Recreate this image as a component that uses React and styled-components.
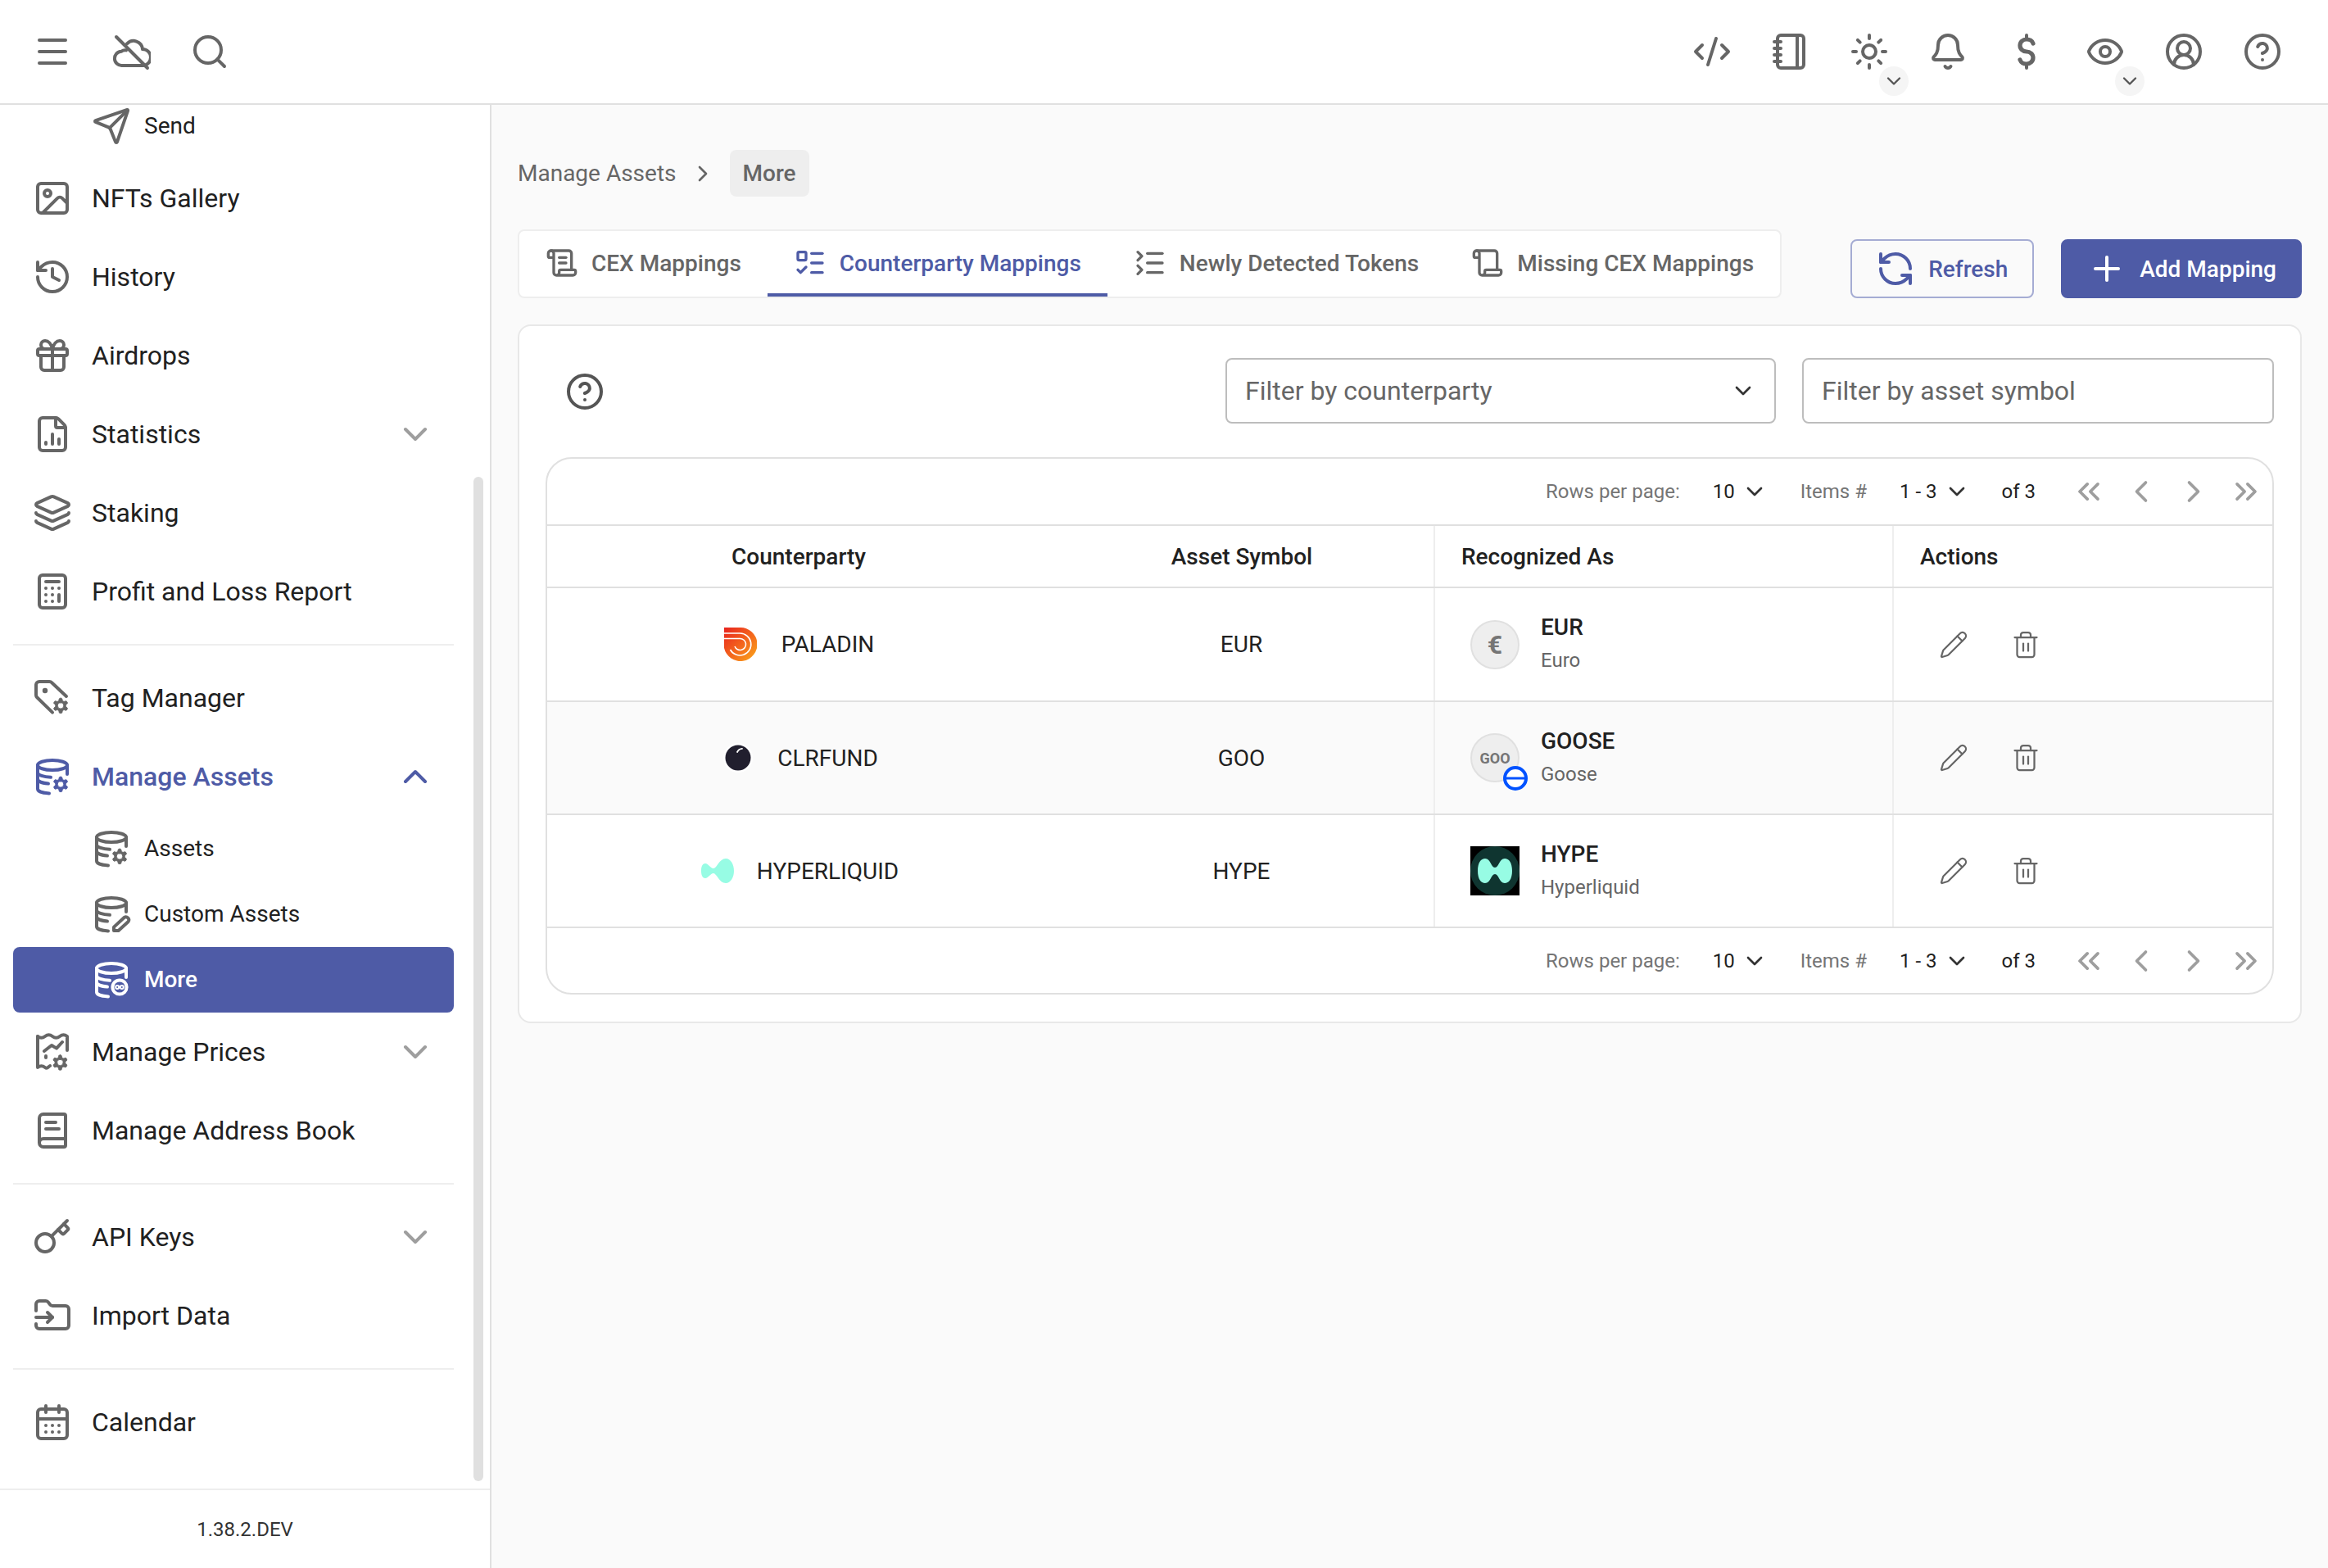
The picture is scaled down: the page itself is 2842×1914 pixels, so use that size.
import React from "react";
import styled, { createGlobalStyle } from "styled-components";
import {
  Menu, Search, Send, Image, History, Gift, FileChartColumn, Layers, Calculator,
  ChevronDown, ChevronUp, ChevronRight, ChevronLeft, ChevronsLeft, ChevronsRight, BookText, Key, FolderInput,
  CalendarDays, CodeXml, Notebook, Sun, Bell, Eye, CircleUserRound, CircleHelp,
  ScrollText, Scroll, ListTodo, ListCollapse, RefreshCcw, Plus, Pencil, Trash2,
} from "lucide-react";

const PRIMARY = "#4e5ba6";

const Global = createGlobalStyle`
  html, body { margin: 0; padding: 0; background: #fff; }
  body { font-family: Roboto, "Liberation Sans", sans-serif; color: #212121; }
  * { box-sizing: border-box; }
`;

const Page = styled.div`
  width: 2842px;
  height: 1914px;
  display: flex;
  flex-direction: column;
  overflow: hidden;
`;

const TopBar = styled.header`
  height: 128px;
  flex: none;
  display: flex;
  justify-content: space-between;
  align-items: center;
  padding: 0 32px 0 16px;
  background: #fff;
  border-bottom: 2px solid #e0e0e0;
`;

const TopGroup = styled.div`
  display: flex;
  align-items: center;
`;

const TopButton = styled.div`
  position: relative;
  width: 96px;
  height: 96px;
  display: flex;
  align-items: center;
  justify-content: center;
  color: #666;
`;

const MiniBadge = styled.span`
  position: absolute;
  right: 0;
  bottom: -6px;
  width: 36px;
  height: 36px;
  border-radius: 50%;
  background: #f5f5f5;
  color: #555;
  display: flex;
  align-items: center;
  justify-content: center;
`;

const Body = styled.div`
  flex: 1;
  display: flex;
  min-height: 0;
`;

const Sidebar = styled.aside`
  position: relative;
  width: 600px;
  flex: none;
  display: flex;
  flex-direction: column;
  background: #fff;
  border-right: 2px solid #e0e0e0;
`;

const NavScroll = styled.nav`
  flex: 1;
  min-height: 0;
  overflow: hidden;
`;

const NavInner = styled.div`
  margin-top: -14px;
`;

const NavRow = styled.div`
  height: 96px;
  margin: 0 44px 0 16px;
  padding: 0 23px 0 24px;
  display: flex;
  align-items: center;
  gap: 24px;
  font-size: 32px;
  font-weight: ${(p) => (p.$open ? 500 : 400)};
  color: ${(p) => (p.$open ? PRIMARY : "#212121")};
  svg { color: ${(p) => (p.$open ? PRIMARY : "#666")}; flex: none; }
`;

const NavLabel = styled.span`
  flex: 1;
`;

const SubRow = styled.div`
  height: 80px;
  margin: 0 44px 0 16px;
  padding-left: 96px;
  display: flex;
  align-items: center;
  gap: 16px;
  font-size: 28px;
  border-radius: 8px;
  font-weight: ${(p) => (p.$active ? 500 : 400)};
  color: ${(p) => (p.$active ? "#fff" : "#212121")};
  background: ${(p) => (p.$active ? PRIMARY : "transparent")};
  svg { color: ${(p) => (p.$active ? "#fff" : "#666")}; flex: none; }
`;

const SubLabel = styled.span`
  margin-top: -2px;
`;

const NavDivider = styled.div`
  height: 2px;
  margin: 16px 44px 16px 16px;
  background: #eeeeee;
`;

const NavChevron = styled.span`
  display: flex;
  svg { color: ${(p) => (p.$open ? PRIMARY : "#9e9e9e")}; }
`;

const Thumb = styled.div`
  position: absolute;
  left: 578px;
  top: 454px;
  width: 12px;
  height: 1226px;
  border-radius: 6px;
  background: #e0e0e0;
`;

const SideFooter = styled.div`
  height: 97px;
  flex: none;
  border-top: 2px solid #eeeeee;
  display: flex;
  align-items: center;
  justify-content: center;
  font-size: 24px;
  color: #333;
`;

const Main = styled.main`
  flex: 1;
  min-width: 0;
  background: #fafafa;
  padding: 55px 32px 0 32px;
`;

const Crumbs = styled.div`
  display: flex;
  align-items: center;
  height: 57px;
  margin-bottom: 40px;
  font-size: 28px;
  color: #666;
`;

const CrumbSep = styled.span`
  display: flex;
  width: 65px;
  justify-content: center;
  svg { color: #666; }
`;

const CrumbChip = styled.span`
  height: 57px;
  padding: 0 16px;
  display: flex;
  align-items: center;
  border-radius: 8px;
  background: #eeeeee;
  font-weight: 500;
`;

const ToolRow = styled.div`
  display: flex;
  align-items: flex-end;
  justify-content: space-between;
  margin-bottom: 32px;
`;

const Tabs = styled.div`
  display: flex;
  height: 84px;
  border: 2px solid #eeeeee;
  border-radius: 8px;
  background: #fff;
`;

const Tab = styled.div`
  height: 74px;
  margin-top: 2px;
  padding: 0 32px;
  display: flex;
  align-items: center;
  gap: 16px;
  font-size: 28px;
  font-weight: 500;
  color: ${(p) => (p.$active ? PRIMARY : "#666")};
  box-shadow: ${(p) => (p.$active ? `0 4px 0 ${PRIMARY}` : "none")};
`;

const ButtonRow = styled.div`
  display: flex;
  gap: 33px;
`;

const Button = styled.div`
  height: 72px;
  padding: ${(p) => (p.$solid ? "0 29px 0 30px" : "0 30px 0 29px")};
  display: flex;
  align-items: center;
  gap: 16px;
  border-radius: 8px;
  font-size: 28px;
  font-weight: 500;
  color: ${(p) => (p.$solid ? "#fff" : PRIMARY)};
  background: ${(p) => (p.$solid ? PRIMARY : "transparent")};
  border: 2px solid ${(p) => (p.$solid ? PRIMARY : "#a5acd3")};
`;

const Card = styled.section`
  width: 2178px;
  padding: 39px 32px 33px;
  border: 2px solid #e8e8e8;
  border-radius: 16px;
  background: #fff;
`;

const FilterRow = styled.div`
  display: flex;
  align-items: center;
  gap: 32px;
  margin-bottom: 41px;
  padding-left: 24px;
  svg { flex: none; }
`;

const HelpWrap = styled.div`
  flex: 1;
  display: flex;
  padding-top: 2px;
  color: #555;
`;

const Field = styled.div`
  width: ${(p) => p.$w}px;
  height: 80px;
  padding: 0 22px;
  display: flex;
  align-items: center;
  justify-content: space-between;
  border: 2px solid #bdbdbd;
  border-radius: 8px;
  font-size: 32px;
  color: #666;
  svg { color: #333; }
`;

const TableFrame = styled.div`
  border: 2px solid #e0e0e0;
  border-radius: 32px;
  overflow: hidden;
`;

const PagerRow = styled.div`
  height: ${(p) => p.$h}px;
  display: flex;
  align-items: center;
  justify-content: flex-end;
  font-size: 24px;
  color: #212121;
  border-top: ${(p) => (p.$rule ? "2px solid #e0e0e0" : "none")};
`;

const PagerLabel = styled.span`
  color: #757575;
  margin-right: ${(p) => p.$mr}px;
`;

const PagerPick = styled.span`
  display: flex;
  align-items: center;
  gap: 8px;
  margin-right: ${(p) => p.$mr}px;
  svg { color: #333; }
`;

const PagerTotal = styled.span`
  margin-right: 33px;
`;

const PagerNav = styled.span`
  width: 64px;
  display: flex;
  justify-content: center;
  svg { color: #9e9e9e; }
`;

const GridRow = styled.div`
  display: grid;
  grid-template-columns: 610px 472px 560px 1fr;
  height: ${(p) => p.$h}px;
  border-top: 2px solid #e0e0e0;
  background: ${(p) => (p.$alt ? "#fafafa" : "#fff")};
`;

const HeadCell = styled.div`
  display: flex;
  align-items: center;
  font-size: 28px;
  font-weight: 500;
  color: #212121;
  justify-content: ${(p) => (p.$center ? "center" : "flex-start")};
  padding-left: ${(p) => (p.$center ? 4 : 32)}px;
  border-left: ${(p) => (p.$line ? "2px solid #eeeeee" : "none")};
`;

const CounterCell = styled.div`
  display: flex;
  align-items: center;
  justify-content: center;
  gap: 24px;
  font-size: 28px;
  padding-left: 3px;
`;

const LogoBox = styled.span`
  width: 48px;
  height: 48px;
  display: flex;
  align-items: center;
  justify-content: ${(p) => (p.$left ? "flex-start" : "center")};
  padding-left: ${(p) => (p.$left ? 2 : 0)}px;
`;

const CenterCell = styled.div`
  display: flex;
  align-items: center;
  justify-content: center;
  padding-left: 3px;
  font-size: 28px;
`;

const AssetCell = styled.div`
  display: flex;
  align-items: center;
  gap: 26px;
  padding-left: 43px;
  border-left: 2px solid #eeeeee;
`;

const Avatar = styled.span`
  position: relative;
  width: 60px;
  height: 60px;
  flex: none;
  display: flex;
  align-items: center;
  justify-content: center;
  border-radius: 50%;
  background: #eeeeee;
  border: 2px solid #e0e0e0;
  color: #757575;
  font-weight: 700;
  font-size: ${(p) => p.$fs}px;
`;

const BaseBadge = styled.span`
  position: absolute;
  right: -12px;
  bottom: -12px;
  display: flex;
`;

const HypeAvatar = styled.span`
  width: 60px;
  height: 60px;
  flex: none;
  display: flex;
  background: #000;
`;

const AssetText = styled.div`
  display: flex;
  flex-direction: column;
  gap: 8px;
  margin-top: -1px;
`;

const AssetName = styled.span`
  font-size: 28px;
  font-weight: 500;
  line-height: 32px;
`;

const AssetSub = styled.span`
  font-size: 24px;
  line-height: 32px;
  color: #666;
`;

const ActionCell = styled.div`
  display: flex;
  align-items: center;
  gap: 52px;
  padding-left: 55px;
  border-left: 2px solid #eeeeee;
  svg { color: #666; }
`;

const Icon = styled.svg.attrs({
  viewBox: "0 0 24 24",
  fill: "none",
  stroke: "currentColor",
  strokeWidth: 2,
  strokeLinecap: "round",
  strokeLinejoin: "round",
})`
  width: 48px;
  height: 48px;
`;

const GEAR = "M12.22 2h-.44a2 2 0 0 0-2 2v.18a2 2 0 0 1-1 1.73l-.43.25a2 2 0 0 1-2 0l-.15-.08a2 2 0 0 0-2.73.73l-.22.38a2 2 0 0 0 .73 2.73l.15.1a2 2 0 0 1 1 1.72v.51a2 2 0 0 1-1 1.74l-.15.09a2 2 0 0 0-.73 2.73l.22.38a2 2 0 0 0 2.73.73l.15-.08a2 2 0 0 1 2 0l.43.25a2 2 0 0 1 1 1.73V20a2 2 0 0 0 2 2h.44a2 2 0 0 0 2-2v-.18a2 2 0 0 1 1-1.73l.43-.25a2 2 0 0 1 2 0l.15.08a2 2 0 0 0 2.73-.73l.22-.39a2 2 0 0 0-.73-2.73l-.15-.08a2 2 0 0 1-1-1.74v-.5a2 2 0 0 1 1-1.74l.15-.09a2 2 0 0 0 .73-2.73l-.22-.38a2 2 0 0 0-2.73-.73l-.15.08a2 2 0 0 1-2 0l-.43-.25a2 2 0 0 1-1-1.73V4a2 2 0 0 0-2-2z";
const HOLE = "M12 8a4 4 0 1 0 0 8a4 4 0 1 0 0-8z";

const Gear = ({ x = 11.5, y = 11.2 }) => (
  <g transform={`translate(${x} ${y}) scale(.46)`} strokeWidth="1">
    <path d={GEAR + HOLE} fill="currentColor" fillRule="evenodd" />
  </g>
);

const CloudCrossed = () => (
  <Icon>
    <path d="M19 20.5H6.5a4.3 4.3 0 0 1-.5-8.600a4 4 0 0 1 3-.7" />
    <path d="M9.500 7.200a5.500 5.500 0 0 1 9.500 3.300a5 5 0 0 1 0 10" />
    <path d="M3 3l19 19" />
  </Icon>
);

const Dollar = () => (
  <Icon>
    <path strokeWidth="2.600" d="M16 7a4 3.500 0 0 0-4-2.500 4 3.750 0 0 0 0 7.500 4 3.750 0 0 1 0 7.500 4 3.500 0 0 1-4-2.500" />
    <path d="M12 2v2.500M12 19.500V22" />
  </Icon>
);

const DbBase = () => (
  <>
    <ellipse cx="12" cy="5" rx="9" ry="3" />
    <path d="M21 5v5.5" />
    <path d="M3 5v14.5c0 1.5 3 2.5 7 2.7" />
    <path d="M3 9.5c0 1.5 3.5 2.7 8 2.9" />
    <path d="M3 13.5c0 1.5 3 2.5 6.500 2.800" />
  </>
);

const DbGear = () => (
  <Icon>
    <DbBase />
    <Gear />
  </Icon>
);

const DbPencil = () => (
  <Icon>
    <DbBase />
    <path d="M13.5 22v-2.200l6.300-5.800a1.800 1.800 0 0 1 2.500 2.500l-6 5.500z" />
  </Icon>
);

const DbMore = () => (
  <Icon>
    <DbBase />
    <circle cx="17" cy="16.500" r="4.300" />
    <circle cx="15.600" cy="16.500" r=".5" />
    <circle cx="18.400" cy="16.500" r=".5" />
  </Icon>
);

const TagGear = () => (
  <Icon>
    <path d="M12 20.800l-9.400-9.200a2 2 0 0 1-.6-1.400V4a2 2 0 0 1 2-2h6.200a2 2 0 0 1 1.400.6L20.500 11" />
    <circle cx="7.500" cy="7.500" r=".6" fill="currentColor" />
    <Gear />
  </Icon>
);

const PriceGear = () => (
  <Icon>
    <path d="M3 2.500c1.500 1.200 3 1.200 4.500 0s3-1.200 4.500 0 3 1.200 4.500 0 3-1.200 4.500 0V11" />
    <path d="M3 2.500v19c1.500-1.200 3-1.200 4.500 0s2-.6 3-1" />
    <path d="M7 11.500l4.500-3.500 3 1.800L18 6" />
    <path d="M8 14.500v1" />
    <Gear x={11.2} y={13} />
  </Icon>
);

const PaladinLogo = () => (
  <svg width="40" height="41" viewBox="0 0 40 41">
    <defs>
      <linearGradient id="pal" x1="0" y1="0" x2="1" y2="1">
        <stop offset="0" stopColor="#e8231f" />
        <stop offset="0.55" stopColor="#f46a1c" />
        <stop offset="1" stopColor="#fbab1b" />
      </linearGradient>
    </defs>
    <path d="M0 0h19.500a20.500 20.500 0 1 1-19.500 25z" fill="url(#pal)" />
    <path d="M0 7h19.500a13.500 13.500 0 1 1-12 20M0 13.500h19.500a7 7 0 1 1-6.500 9.500" fill="none" stroke="#fff" strokeWidth="1.600" />
  </svg>
);

const ClrLogo = () => (
  <svg width="36" height="36" viewBox="0 0 36 36">
    <circle cx="18" cy="18" r="18" fill="#fff" />
    <circle cx="18" cy="18" r="15.500" fill="#211f2e" />
    <path d="M17 11c1.200-2.500 3.500-4 6-4.200" fill="none" stroke="#fff" strokeWidth="1.800" strokeLinecap="round" />
  </svg>
);

const HyperLogo = () => (
  <svg width="40" height="40" viewBox="0 0 40 40">
    <path d="M0 20C0 14 2 11 5 11C9 11 11 17 15 17C19 17 22 5 30 5C36 5 40 12 40 20C40 28 36 35 30 35C22 35 19 23 15 23C11 23 9 29 5 29C2 29 0 26 0 20Z" fill="#97fce4" />
  </svg>
);

const HypeMark = () => (
  <svg width="60" height="60" viewBox="0 0 60 60">
    <circle cx="30" cy="30" r="30" fill="#0f3530" />
    <path d="M51 30C51 40 47 45 42 45C35 45 35 34 30 34C25 34 25 45 18 45C13 45 9 40 9 30C9 20 13 15 18 15C25 15 25 26 30 26C35 26 35 15 42 15C47 15 51 20 51 30Z" fill="#97fce4" />
  </svg>
);

const BaseLogo = () => (
  <svg width="30" height="30" viewBox="0 0 30 30">
    <circle cx="15" cy="15" r="13" fill="#fff" stroke="#0052ff" strokeWidth="4" />
    <path d="M4 15h22" stroke="#0052ff" strokeWidth="3" />
  </svg>
);

const Pager = ({ h, rule }) => (
  <PagerRow $h={h} $rule={rule}>
    <PagerLabel $mr={40}>Rows per page:</PagerLabel>
    <PagerPick $mr={40}>10 <ChevronDown size={32} /></PagerPick>
    <PagerLabel $mr={40}>Items #</PagerLabel>
    <PagerPick $mr={39}>1 - 3 <ChevronDown size={32} /></PagerPick>
    <PagerTotal>of 3</PagerTotal>
    <PagerNav><ChevronsLeft size={44} /></PagerNav>
    <PagerNav><ChevronLeft size={44} /></PagerNav>
    <PagerNav><ChevronRight size={44} /></PagerNav>
    <PagerNav><ChevronsRight size={44} /></PagerNav>
  </PagerRow>
);

const Actions = () => (
  <ActionCell>
    <Pencil size={36} strokeWidth={1.5} />
    <Trash2 size={36} strokeWidth={1.5} />
  </ActionCell>
);

export default function App() {
  return (
    <Page>
      <Global />
      <TopBar>
        <TopGroup>
          <TopButton><Menu size={48} /></TopButton>
          <TopButton><CloudCrossed /></TopButton>
          <TopButton><Search size={48} /></TopButton>
        </TopGroup>
        <TopGroup>
          <TopButton><CodeXml size={48} /></TopButton>
          <TopButton><Notebook size={48} /></TopButton>
          <TopButton><Sun size={48} /><MiniBadge><ChevronDown size={28} /></MiniBadge></TopButton>
          <TopButton><Bell size={48} /></TopButton>
          <TopButton><Dollar /></TopButton>
          <TopButton><Eye size={48} /><MiniBadge><ChevronDown size={28} /></MiniBadge></TopButton>
          <TopButton><CircleUserRound size={48} /></TopButton>
          <TopButton><CircleHelp size={48} /></TopButton>
        </TopGroup>
      </TopBar>
      <Body>
        <Sidebar>
          <NavScroll>
            <NavInner>
              <SubRow><Send size={48} /><SubLabel>Send</SubLabel></SubRow>
              <NavRow><Image size={48} /><NavLabel>NFTs Gallery</NavLabel></NavRow>
              <NavRow><History size={48} /><NavLabel>History</NavLabel></NavRow>
              <NavRow><Gift size={48} /><NavLabel>Airdrops</NavLabel></NavRow>
              <NavRow><FileChartColumn size={48} /><NavLabel>Statistics</NavLabel><NavChevron><ChevronDown size={48} /></NavChevron></NavRow>
              <NavRow><Layers size={48} /><NavLabel>Staking</NavLabel></NavRow>
              <NavRow><Calculator size={48} /><NavLabel>Profit and Loss Report</NavLabel></NavRow>
              <NavDivider />
              <NavRow><TagGear /><NavLabel>Tag Manager</NavLabel></NavRow>
              <NavRow $open><DbGear /><NavLabel>Manage Assets</NavLabel><NavChevron $open><ChevronUp size={48} /></NavChevron></NavRow>
              <SubRow><DbGear /><SubLabel>Assets</SubLabel></SubRow>
              <SubRow><DbPencil /><SubLabel>Custom Assets</SubLabel></SubRow>
              <SubRow $active><DbMore /><SubLabel>More</SubLabel></SubRow>
              <NavRow><PriceGear /><NavLabel>Manage Prices</NavLabel><NavChevron><ChevronDown size={48} /></NavChevron></NavRow>
              <NavRow><BookText size={48} /><NavLabel>Manage Address Book</NavLabel></NavRow>
              <NavDivider />
              <NavRow><Key size={48} /><NavLabel>API Keys</NavLabel><NavChevron><ChevronDown size={48} /></NavChevron></NavRow>
              <NavRow><FolderInput size={48} /><NavLabel>Import Data</NavLabel></NavRow>
              <NavDivider />
              <NavRow><CalendarDays size={48} /><NavLabel>Calendar</NavLabel></NavRow>
            </NavInner>
          </NavScroll>
          <SideFooter>1.38.2.DEV</SideFooter>
          <Thumb />
        </Sidebar>
        <Main>
          <Crumbs>
            Manage Assets
            <CrumbSep><ChevronRight size={32} /></CrumbSep>
            <CrumbChip>More</CrumbChip>
          </Crumbs>
          <ToolRow>
            <Tabs>
              <Tab><ScrollText size={40} />CEX Mappings</Tab>
              <Tab $active><ListTodo size={40} />Counterparty Mappings</Tab>
              <Tab><ListCollapse size={40} />Newly Detected Tokens</Tab>
              <Tab><Scroll size={40} />Missing CEX Mappings</Tab>
            </Tabs>
            <ButtonRow>
              <Button><RefreshCcw size={48} />Refresh</Button>
              <Button $solid><Plus size={48} />Add Mapping</Button>
            </ButtonRow>
          </ToolRow>
          <Card>
            <FilterRow>
              <HelpWrap><CircleHelp size={48} /></HelpWrap>
              <Field $w={672}>Filter by counterparty <ChevronDown size={32} /></Field>
              <Field $w={576}>Filter by asset symbol</Field>
            </FilterRow>
            <TableFrame>
              <Pager h={80} />
              <GridRow $h={76}>
                <HeadCell $center>Counterparty</HeadCell>
                <HeadCell $center>Asset Symbol</HeadCell>
                <HeadCell $line>Recognized As</HeadCell>
                <HeadCell $line>Actions</HeadCell>
              </GridRow>
              <GridRow $h={139}>
                <CounterCell><LogoBox $left><PaladinLogo /></LogoBox>PALADIN</CounterCell>
                <CenterCell>EUR</CenterCell>
                <AssetCell>
                  <Avatar $fs={32}>€</Avatar>
                  <AssetText><AssetName>EUR</AssetName><AssetSub>Euro</AssetSub></AssetText>
                </AssetCell>
                <Actions />
              </GridRow>
              <GridRow $h={138} $alt>
                <CounterCell><LogoBox><ClrLogo /></LogoBox>CLRFUND</CounterCell>
                <CenterCell>GOO</CenterCell>
                <AssetCell>
                  <Avatar $fs={18}>GOO<BaseBadge><BaseLogo /></BaseBadge></Avatar>
                  <AssetText><AssetName>GOOSE</AssetName><AssetSub>Goose</AssetSub></AssetText>
                </AssetCell>
                <Actions />
              </GridRow>
              <GridRow $h={138}>
                <CounterCell><LogoBox><HyperLogo /></LogoBox>HYPERLIQUID</CounterCell>
                <CenterCell>HYPE</CenterCell>
                <AssetCell>
                  <HypeAvatar><HypeMark /></HypeAvatar>
                  <AssetText><AssetName>HYPE</AssetName><AssetSub>Hyperliquid</AssetSub></AssetText>
                </AssetCell>
                <Actions />
              </GridRow>
              <Pager h={81} rule />
            </TableFrame>
          </Card>
        </Main>
      </Body>
    </Page>
  );
}
